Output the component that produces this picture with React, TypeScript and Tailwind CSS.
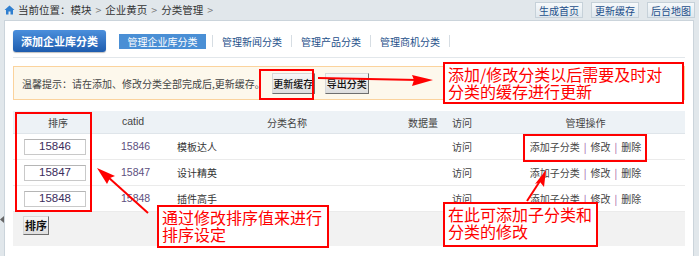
import React from "react"

const cjk = "font-['Noto_Sans_CJK_SC','Noto_Sans',sans-serif]"
const latin = "font-['Liberation_Sans',Arial,sans-serif]"

const topLinks = ["生成首页", "更新缓存", "后台地图"]
const tabLinks = ["管理新闻分类", "管理产品分类", "管理商机分类"]
const crumbs = ["模块", "企业黄页", "分类管理"]

const rows = [
  { order: "15846", catid: "15846", name: "模板达人" },
  { order: "15847", catid: "15847", name: "设计精英" },
  { order: "15848", catid: "15848", name: "插件高手" },
]

const cols = "grid grid-cols-[90px_64px_240px_36px_43px_1fr]"

function HomeIcon() {
  return (
    <svg width="11" height="10" viewBox="0 0 11 10" className="shrink-0">
      <path d="M5.5 0.5 L10.5 5 L9 5 L9 9.5 L6.5 9.5 L6.5 6.5 L4.5 6.5 L4.5 9.5 L2 9.5 L2 5 L0.5 5 Z" fill="#2f7fd0" />
    </svg>
  )
}

function OldButton({ label, className = "" }: { label: string; className?: string }) {
  return (
    <div
      className={`flex items-center justify-center whitespace-nowrap border border-t-[#d8d8d8] border-l-[#d8d8d8] border-r-[#6e6e6e] border-b-[#6e6e6e] bg-gradient-to-b from-[#f7f7f7] to-[#dedede] text-[#111] ${className}`}
    >
      {label}
    </div>
  )
}

function Annotation({ lines, className }: { lines: string[]; className: string }) {
  return (
    <div
      className={`absolute border-2 border-[#ff0000] bg-white pl-[3px] pt-[2px] text-[16px] leading-[17px] text-[#ff0000] ${className}`}
    >
      {lines.map((l) => (
        <div key={l} className="whitespace-nowrap">
          {l}
        </div>
      ))}
    </div>
  )
}

export default function App() {
  return (
    <div className={`relative h-[256px] w-[699px] overflow-hidden bg-[#e1e7eb] text-[10px] text-[#333] ${cjk}`}>
      {/* breadcrumb + shortcuts */}
      <div className="flex h-[20px] items-center justify-between pl-[4px] pr-[4px]">
        <div className="flex items-center text-[10.5px] text-[#333]">
          <HomeIcon />
          <span className="ml-[3px]">当前位置：</span>
          {crumbs.map((c) => (
            <React.Fragment key={c}>
              <span>{c}</span>
              <span className="mx-[4px] text-[#777]">&gt;</span>
            </React.Fragment>
          ))}
        </div>
        <div className="flex gap-[8px]">
          {topLinks.map((t) => (
            <div
              key={t}
              className="flex h-[16px] w-[48px] items-center justify-center border border-[#c6d1d9] bg-gradient-to-b from-[#f6f9fb] to-[#e0e8ee] text-[10px] text-[#1d4f8a]"
            >
              {t}
            </div>
          ))}
        </div>
      </div>

      {/* main panel */}
      <div className="ml-[4px] mr-[5px] h-[240px] border border-[#cbd4db] bg-white px-[8px] pt-[9px]">
        <div className="flex items-center border-b border-[#e2e7eb] pb-[5px]">
          <div className="flex h-[22px] w-[93px] items-center justify-center rounded-[3px] bg-gradient-to-b from-[#4b8fdc] to-[#1d5cae] text-[11px] font-bold text-white shadow-[0_1px_1px_rgba(0,0,0,0.25)]">
            添加企业库分类
          </div>
          <div className="ml-[13px] flex h-[15px] w-[87px] items-center justify-center bg-[#4a8fd5] text-[10px] text-white">
            管理企业库分类
          </div>
          <div className="ml-[6px] flex items-center gap-[9px]">
            {tabLinks.map((t) => (
              <React.Fragment key={t}>
                <span className="h-[12px] w-px bg-[#d6dde3]" />
                <span className="text-[10px] text-[#1d4f8a]">{t}</span>
              </React.Fragment>
            ))}
            <span className="h-[12px] w-px bg-[#d6dde3]" />
          </div>
        </div>

        {/* tip */}
        <div className="mt-[8px] flex h-[34px] items-center border border-[#fbd39d] bg-[#fdf8ec] pl-[8px]">
          <span className="text-[10px] text-[#444]">温馨提示：请在添加、修改分类全部完成后,更新缓存。</span>
          <OldButton label="更新缓存" className="ml-[7px] h-[21px] w-[43px] text-[10px] font-medium" />
          <OldButton label="导出分类" className="ml-[10px] h-[21px] w-[44px] text-[10px] font-medium" />
        </div>

        {/* table */}
        <div className="mt-[11px]">
          <div className={`${cols} h-[23px] items-center border-b border-[#dfe5ea] bg-[#edf2f6] text-[10px] text-[#444]`}>
            <div className="text-center">排序</div>
            <div className={`pl-[19px] text-[10.5px] ${latin}`}>catid</div>
            <div className="text-center">分类名称</div>
            <div className="pr-[5px] text-right">数据量</div>
            <div className="pl-[9px]">访问</div>
            <div className="text-center">管理操作</div>
          </div>
          {rows.map((r) => (
            <div key={r.catid} className={`${cols} h-[26px] items-center border-b border-[#ebebeb]`}>
              <div className="pl-[11px]">
                <div
                  className={`flex h-[16px] w-[62px] items-center justify-center border border-[#c9c9c9] border-t-[#b5b5b5] text-[11.5px] text-[#3b2d5c] ${latin}`}
                >
                  {r.order}
                </div>
              </div>
              <div className={`pl-[18px] text-[10.5px] text-[#5d4f80] ${latin}`}>{r.catid}</div>
              <div className="pl-[10px] text-[#333]">{r.name}</div>
              <div />
              <div className="pl-[9px] text-[#444]">访问</div>
              <div className="text-center text-[#444]">
                添加子分类<span className="mx-[4px] text-[#9b4fa0]">|</span>修改
                <span className="mx-[4px] text-[#9b4fa0]">|</span>删除
              </div>
            </div>
          ))}
          <div className="h-[34px] bg-[#f2f2f2] pl-[10px] pt-[4px]">
            <OldButton label="排序" className="h-[19px] w-[26px] text-[11px] font-bold" />
          </div>
        </div>
      </div>

      {/* collapse handle */}
      <svg className="absolute left-0 top-[216px]" width="4" height="7" viewBox="0 0 4 7">
        <path d="M4 0 L0 3.5 L4 7 Z" fill="#666" />
      </svg>

      {/* highlight boxes */}
      <div className="absolute left-[259px] top-[69px] h-[31px] w-[55px] border-2 border-[#ff0000]" />
      <div className="absolute left-[15px] top-[112px] h-[100px] w-[77px] border-2 border-[#ff0000]" />
      <div className="absolute left-[523px] top-[134px] h-[28px] w-[124px] border-2 border-[#ff0000]" />

      {/* arrows */}
      <svg className="pointer-events-none absolute inset-0" width="699" height="256">
        <line x1="318" y1="78" x2="418" y2="80" stroke="#ff0000" strokeWidth="2" />
        <polygon points="433,80 412,75 414,80 412,86" fill="#ff0000" />
        <line x1="148" y1="213" x2="108" y2="177" stroke="#ff0000" strokeWidth="2" />
        <polygon points="97,168 115,176 110,178 107,184" fill="#ff0000" />
        <line x1="527" y1="201" x2="540" y2="181" stroke="#ff0000" strokeWidth="2" />
        <polygon points="546,170 544,187 540,182 535,184" fill="#ff0000" />
      </svg>

      {/* annotations */}
      <Annotation className="left-[443px] top-[62px] h-[42px] w-[241px]" lines={["添加/修改分类以后需要及时对", "分类的缓存进行更新"]} />
      <Annotation className="left-[157px] top-[205px] h-[43px] w-[172px]" lines={["通过修改排序值来进行", "排序设定"]} />
      <Annotation className="left-[443px] top-[202px] h-[45px] w-[155px]" lines={["在此可添加子分类和", "分类的修改"]} />
    </div>
  )
}
